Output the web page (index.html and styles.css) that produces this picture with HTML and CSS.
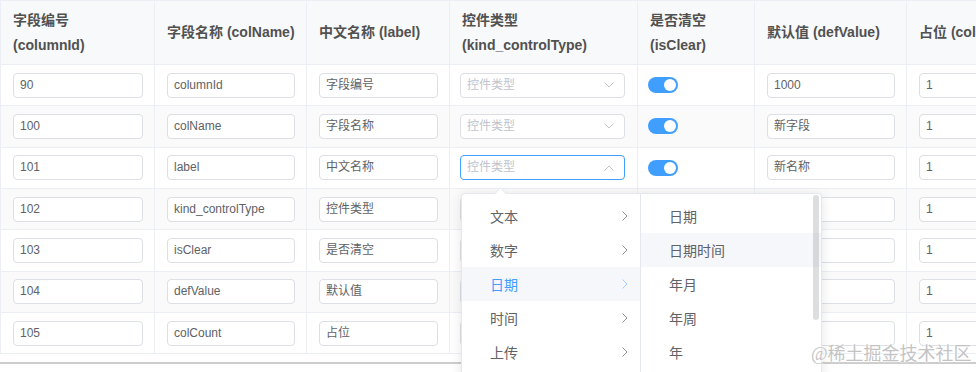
FILE: index.html
```html
<!DOCTYPE html>
<html lang="zh-CN">
<head>
<meta charset="utf-8">
<title>字段配置</title>
<link rel="stylesheet" href="styles.css">
</head>
<body>
<div class="page">
  <div class="grid">
    <div class="row head">
      <div class="cell"><div class="th">字段编号<br>(columnId)</div></div>
      <div class="cell"><div class="th">字段名称 (colName)</div></div>
      <div class="cell"><div class="th">中文名称 (label)</div></div>
      <div class="cell"><div class="th">控件类型<br>(kind_controlType)</div></div>
      <div class="cell"><div class="th">是否清空<br>(isClear)</div></div>
      <div class="cell"><div class="th">默认值 (defValue)</div></div>
      <div class="cell"><div class="th">占位 (colCount)</div></div>
    </div>

    <div class="row">
      <div class="cell"><div class="input">90</div></div>
      <div class="cell"><div class="input">columnId</div></div>
      <div class="cell"><div class="input">字段编号</div></div>
      <div class="cell sel"><div class="input select"><span class="ph">控件类型</span><svg class="chev" viewBox="0 0 10 6" width="10" height="6"><path d="M0.5 0.5 L5 5 L9.5 0.5" fill="none" stroke="#c0c4cc" stroke-width="1"/></svg></div></div>
      <div class="cell"><span class="switch"></span></div>
      <div class="cell"><div class="input">1000</div></div>
      <div class="cell"><div class="input">1</div></div>
    </div>

    <div class="row stripe">
      <div class="cell"><div class="input">100</div></div>
      <div class="cell"><div class="input">colName</div></div>
      <div class="cell"><div class="input">字段名称</div></div>
      <div class="cell sel"><div class="input select"><span class="ph">控件类型</span><svg class="chev" viewBox="0 0 10 6" width="10" height="6"><path d="M0.5 0.5 L5 5 L9.5 0.5" fill="none" stroke="#c0c4cc" stroke-width="1"/></svg></div></div>
      <div class="cell"><span class="switch"></span></div>
      <div class="cell"><div class="input">新字段</div></div>
      <div class="cell"><div class="input">1</div></div>
    </div>

    <div class="row">
      <div class="cell"><div class="input">101</div></div>
      <div class="cell"><div class="input">label</div></div>
      <div class="cell"><div class="input">中文名称</div></div>
      <div class="cell sel"><div class="input select focus"><span class="ph">控件类型</span><svg class="chev" viewBox="0 0 10 6" width="10" height="6"><path d="M0.5 5.5 L5 1 L9.5 5.5" fill="none" stroke="#c0c4cc" stroke-width="1"/></svg></div></div>
      <div class="cell"><span class="switch"></span></div>
      <div class="cell"><div class="input">新名称</div></div>
      <div class="cell"><div class="input">1</div></div>
    </div>

    <div class="row stripe">
      <div class="cell"><div class="input">102</div></div>
      <div class="cell"><div class="input">kind_controlType</div></div>
      <div class="cell"><div class="input">控件类型</div></div>
      <div class="cell sel"><div class="input select"></div></div>
      <div class="cell"><span class="switch"></span></div>
      <div class="cell"><div class="input"></div></div>
      <div class="cell"><div class="input">1</div></div>
    </div>

    <div class="row">
      <div class="cell"><div class="input">103</div></div>
      <div class="cell"><div class="input">isClear</div></div>
      <div class="cell"><div class="input">是否清空</div></div>
      <div class="cell sel"><div class="input select"></div></div>
      <div class="cell"><span class="switch"></span></div>
      <div class="cell"><div class="input"></div></div>
      <div class="cell"><div class="input">1</div></div>
    </div>

    <div class="row stripe">
      <div class="cell"><div class="input">104</div></div>
      <div class="cell"><div class="input">defValue</div></div>
      <div class="cell"><div class="input">默认值</div></div>
      <div class="cell sel"><div class="input select"></div></div>
      <div class="cell"><span class="switch"></span></div>
      <div class="cell"><div class="input"></div></div>
      <div class="cell"><div class="input">1</div></div>
    </div>

    <div class="row">
      <div class="cell"><div class="input">105</div></div>
      <div class="cell"><div class="input">colCount</div></div>
      <div class="cell"><div class="input">占位</div></div>
      <div class="cell sel"><div class="input select"></div></div>
      <div class="cell"><span class="switch"></span></div>
      <div class="cell"><div class="input"></div></div>
      <div class="cell"><div class="input">1</div></div>
    </div>
  </div>
  <div class="scrollline"></div>

  <div class="cascader">
    <ul class="menu">
      <li class="node">文本<svg class="arr" viewBox="0 0 6 10" width="6" height="10"><path d="M0.5 0.5 L5 5 L0.5 9.5" fill="none" stroke="#909399" stroke-width="1"/></svg></li>
      <li class="node">数字<svg class="arr" viewBox="0 0 6 10" width="6" height="10"><path d="M0.5 0.5 L5 5 L0.5 9.5" fill="none" stroke="#909399" stroke-width="1"/></svg></li>
      <li class="node active">日期<svg class="arr" viewBox="0 0 6 10" width="6" height="10"><path d="M0.5 0.5 L5 5 L0.5 9.5" fill="none" stroke="#a0cfff" stroke-width="1"/></svg></li>
      <li class="node">时间<svg class="arr" viewBox="0 0 6 10" width="6" height="10"><path d="M0.5 0.5 L5 5 L0.5 9.5" fill="none" stroke="#909399" stroke-width="1"/></svg></li>
      <li class="node">上传<svg class="arr" viewBox="0 0 6 10" width="6" height="10"><path d="M0.5 0.5 L5 5 L0.5 9.5" fill="none" stroke="#909399" stroke-width="1"/></svg></li>
    </ul>
    <ul class="menu second">
      <li class="node">日期</li>
      <li class="node hover">日期时间</li>
      <li class="node">年月</li>
      <li class="node">年周</li>
      <li class="node">年</li>
      <li class="thumb"></li>
    </ul>
  </div>

  <div class="watermark">@稀土掘金技术社区</div>
</div>
</body>
</html>
```

FILE: styles.css
```css
html, body {
  margin: 0;
  padding: 0;
  overflow: hidden;
  background: #fff;
}

.page {
  position: relative;
  width: 976px;
  height: 372px;
  overflow: hidden;
  font-family: "Liberation Sans", "Noto Sans CJK SC", sans-serif;
  color: #606266;
}

.grid {
  width: 1058px;
  border-top: 1px solid #ebeef5;
  border-left: 1px solid #ebeef5;
}

.row {
  display: grid;
  grid-template-columns: 154px 152px 143px 188px 117px 152px 152px;
  height: 41.33px;
  background: #fff;
}

.row.stripe {
  background: #fafafa;
}

.row.head {
  height: 64px;
  background: #f8f9fa;
}

.cell {
  box-sizing: border-box;
  display: flex;
  align-items: center;
  padding: 0 11px 0 12px;
  border-right: 1px solid #ebeef5;
  border-bottom: 1px solid #ebeef5;
  min-width: 0;
}

.cell.sel {
  padding-left: 10px;
  padding-right: 12px;
}

.th {
  font-size: 14px;
  font-weight: bold;
  line-height: 25px;
  color: #515151;
  white-space: nowrap;
}

.input {
  box-sizing: border-box;
  width: 100%;
  height: 25px;
  border: 1px solid #dcdfe6;
  border-radius: 4px;
  background: #fff;
  padding: 0 6px;
  font-size: 12px;
  line-height: 23px;
  color: #606266;
  white-space: nowrap;
  overflow: hidden;
  display: flex;
  align-items: center;
  justify-content: space-between;
}

.select .ph {
  color: #c0c4cc;
}

.select .chev {
  margin-right: 4px;
  flex: none;
}

.select.focus {
  border-color: #409eff;
}

.switch {
  position: relative;
  display: inline-block;
  width: 30px;
  height: 16px;
  margin-left: -2px;
  border-radius: 8px;
  background: #409eff;
}

.switch::after {
  content: "";
  position: absolute;
  top: 2px;
  right: 2px;
  width: 12px;
  height: 12px;
  border-radius: 50%;
  background: #fff;
}

.scrollline {
  width: 976px;
  margin-top: 8px;
  border-top: 2px solid #cdcdcd;
}

.cascader {
  position: absolute;
  left: 461px;
  top: 193px;
  display: flex;
  background: #fff;
  border: 1px solid #e4e7ed;
  border-radius: 4px;
  box-shadow: 0 2px 12px rgba(0, 0, 0, 0.1);
  height: 240px;
}

.cascader::before {
  content: "";
  position: absolute;
  top: -5px;
  left: 34px;
  width: 8px;
  height: 8px;
  background: #fff;
  border-top: 1px solid #e4e7ed;
  border-left: 1px solid #e4e7ed;
  transform: rotate(45deg);
}

.menu {
  position: relative;
  list-style: none;
  margin: 0;
  padding: 5px 0 0;
  width: 178px;
  border-right: 1px solid #e4e7ed;
}

.menu.second {
  width: 180px;
  border-right: none;
}

.node {
  height: 34px;
  display: flex;
  align-items: center;
  justify-content: space-between;
  padding: 0 12px 0 28px;
  font-size: 14px;
  color: #606266;
}

.node.active {
  background: #f5f7fa;
  color: #409eff;
}

.node.hover {
  background: #f5f7fa;
}

.thumb {
  position: absolute;
  left: 172px;
  top: 1px;
  width: 6px;
  height: 125px;
  border-radius: 3px;
  background: rgba(144, 147, 153, 0.3);
}

.watermark {
  position: absolute;
  left: 811px;
  top: 343px;
  font-family: "Liberation Serif", "Noto Sans CJK SC", serif;
  font-size: 18px;
  line-height: 22px;
  color: #c4c4c4;
  text-shadow: 0 0 2px #fff, 0 0 2px #fff;
  white-space: nowrap;
}
```
